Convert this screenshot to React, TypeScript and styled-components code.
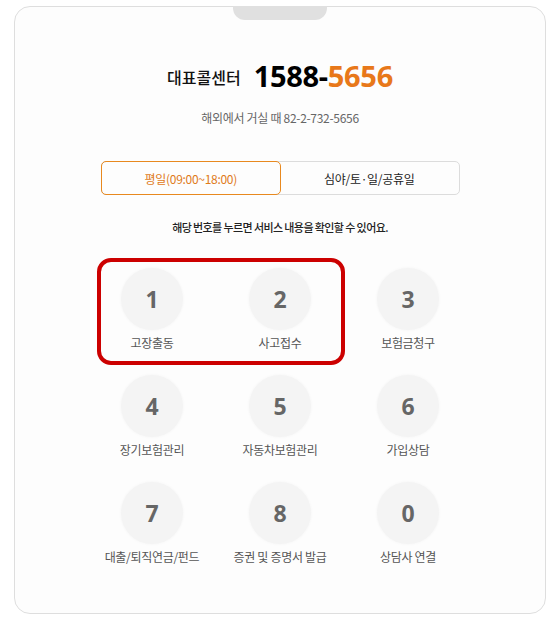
import styled, { createGlobalStyle } from "styled-components";

const GlobalStyle = createGlobalStyle`
  html, body {
    margin: 0;
    padding: 0;
    background: #ffffff;
    font-family: "Noto Sans", "Noto Sans CJK KR", sans-serif;
  }
`;

const SPage = styled.div`
  width: 560px;
  height: 622px;
  padding: 6px 14px 8px;
  box-sizing: border-box;
`;

const SCard = styled.div`
  position: relative;
  height: 100%;
  border: 1px solid #dedede;
  border-radius: 16px;
  background: #fdfdfd;
  box-sizing: border-box;
  display: flex;
  flex-direction: column;
  align-items: center;
`;

const SNotch = styled.div`
  width: 94px;
  height: 14px;
  margin-top: -1px;
  background: #e0e0e0;
  border-radius: 0 0 12px 12px;
`;

const STitle = styled.div`
  margin-top: 33px;
  display: flex;
  align-items: center;
  gap: 13px;
  height: 44px;
`;

const SLabel = styled.span`
  font-family: "Noto Sans CJK KR", sans-serif;
  font-size: 16px;
  font-weight: 500;
  color: #111;
  margin-top: 4px;
`;

const SNumber = styled.span`
  font-family: "Noto Sans", "Noto Sans CJK KR", sans-serif;
  font-size: 29px;
  font-weight: 700;
  color: #000;
  letter-spacing: -0.3px;
`;

const SOrange = styled.span`
  color: #e8781a;
`;

const SSub = styled.div`
  margin-top: 12px;
  font-family: "Noto Sans CJK KR", sans-serif;
  font-size: 12px;
  color: #666;
  letter-spacing: -0.3px;
`;

const STabs = styled.div`
  margin-top: 35px;
  width: 359px;
  height: 34px;
  display: flex;
  border: 1px solid #dcdcdc;
  border-radius: 5px;
  box-sizing: border-box;
`;

const STab = styled.div<{ $active?: boolean }>`
  flex: 1;
  display: flex;
  align-items: center;
  justify-content: center;
  margin: ${({ $active }) => ($active ? "-1px" : "0")};
  border: ${({ $active }) => ($active ? "1px solid #e8891f" : "none")};
  border-radius: 5px;
  font-family: "Noto Sans CJK KR", sans-serif;
  font-size: 12px;
  font-weight: 400;
  color: ${({ $active }) => ($active ? "#e07a1a" : "#222")};
  letter-spacing: -0.3px;
`;

const SHint = styled.div`
  margin-top: 24px;
  font-family: "Noto Sans CJK KR", sans-serif;
  font-size: 11px;
  font-weight: 500;
  color: #222;
  letter-spacing: -0.6px;
`;

const SGrid = styled.div`
  position: relative;
  margin-top: 23px;
  display: grid;
  grid-template-columns: repeat(3, 128px);
  grid-auto-rows: 107px;
`;

const SKey = styled.div`
  display: flex;
  flex-direction: column;
  align-items: center;
  padding-top: 10px;
`;

const SCircle = styled.div`
  width: 62px;
  height: 62px;
  border-radius: 50%;
  background: #f4f4f4;
  box-shadow: 0 0 3px #f4f4f4;
  display: flex;
  align-items: center;
  justify-content: center;
  font-family: "Noto Sans", sans-serif;
  font-size: 23px;
  font-weight: 700;
  color: #666;
`;

const SKeyLabel = styled.div`
  margin-top: 5px;
  font-family: "Noto Sans CJK KR", sans-serif;
  font-size: 12px;
  color: #555;
  letter-spacing: -0.3px;
  line-height: 16px;
`;

const SHighlight = styled.div`
  position: absolute;
  left: 9px;
  top: 0;
  width: 248px;
  height: 107px;
  border: 4px solid #cc0000;
  border-radius: 14px;
  box-sizing: border-box;
  pointer-events: none;
`;

const keys = [
  { n: "1", label: "고장출동" },
  { n: "2", label: "사고접수" },
  { n: "3", label: "보험금청구" },
  { n: "4", label: "장기보험관리" },
  { n: "5", label: "자동차보험관리" },
  { n: "6", label: "가입상담" },
  { n: "7", label: "대출/퇴직연금/펀드" },
  { n: "8", label: "증권 및 증명서 발급" },
  { n: "0", label: "상담사 연결" },
];

const App = () => {
  return (
    <>
      <GlobalStyle />
      <SPage>
        <SCard>
          <SNotch />
          <STitle>
            <SLabel>대표콜센터</SLabel>
            <SNumber>
              1588-<SOrange>5656</SOrange>
            </SNumber>
          </STitle>
          <SSub>해외에서 거실 때 82-2-732-5656</SSub>
          <STabs>
            <STab $active>평일(09:00~18:00)</STab>
            <STab>심야/토·일/공휴일</STab>
          </STabs>
          <SHint>해당 번호를 누르면 서비스 내용을 확인할 수 있어요.</SHint>
          <SGrid>
            {keys.map((k) => (
              <SKey key={k.n}>
                <SCircle>{k.n}</SCircle>
                <SKeyLabel>{k.label}</SKeyLabel>
              </SKey>
            ))}
            <SHighlight />
          </SGrid>
        </SCard>
      </SPage>
    </>
  );
};

export default App;
